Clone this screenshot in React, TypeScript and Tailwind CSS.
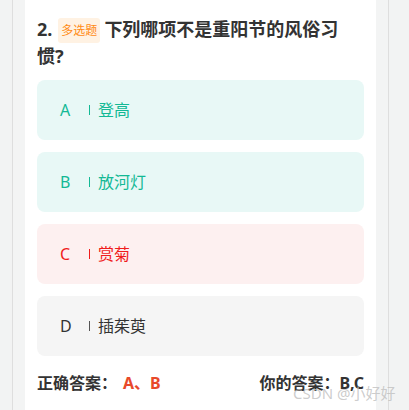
import React from 'react'

type Opt = { key: string; text: string; tone: 'right' | 'wrong' | 'plain' }

const OPTIONS: Opt[] = [
  { key: 'A', text: '登高', tone: 'right' },
  { key: 'B', text: '放河灯', tone: 'right' },
  { key: 'C', text: '赏菊', tone: 'wrong' },
  { key: 'D', text: '插茱萸', tone: 'plain' },
]

const TONE = {
  right: { box: 'bg-[#e8f8f6]', text: 'text-[#13b995]', bar: 'bg-[#13b995]' },
  wrong: { box: 'bg-[#fdf0f0]', text: 'text-[#f01c1c]', bar: 'bg-[#f01c1c]' },
  plain: { box: 'bg-[#f5f5f5]', text: 'text-[#333333]', bar: 'bg-[#555555]' },
}

const FONT = { fontFamily: '"Noto Sans", "Noto Sans CJK SC", sans-serif' }

export default function App() {
  return (
    <div className="relative h-[410px] overflow-hidden bg-[#f2f3f3] pl-[12px] pr-[20px]" style={FONT}>
      <div className="h-full border-x border-[#dedede] bg-[#f3f4f4] px-[12px]">
        <div className="h-full bg-white px-[12px] pt-[16px]">
          {/* ── Question ── */}
          <h2 className="pr-[16px] text-[18px] font-bold leading-[27px] text-[#333333]">
            2.
            <span className="ml-[6px] mr-[4px] inline-block rounded-[3px] bg-[#fff2e3] px-[3px] align-[1px] text-[12px] font-normal leading-[25px] text-[#ff8a14]">
              多选题
            </span>
            下列哪项不是重阳节的风俗习惯?
          </h2>

          {/* ── Options ── */}
          <div className="mt-[10px] flex flex-col gap-[12px]">
            {OPTIONS.map((o) => {
              const t = TONE[o.tone]
              return (
                <div key={o.key} className={`flex h-[60px] items-center rounded-[8px] pl-[23px] ${t.box} ${t.text}`}>
                  <span className="w-[29px] text-[16px] leading-none">{o.key}</span>
                  <span className={`h-[10px] w-px ${t.bar}`} />
                  <span className="ml-[8px] text-[16px] leading-none">{o.text}</span>
                </div>
              )
            })}
          </div>

          {/* ── Answers ── */}
          <div className="mt-[16px] flex items-center justify-between text-[16px] font-bold leading-[22px] text-[#333333]">
            <div>
              正确答案：<span className="ml-[6px] text-[#e8492a]">A、B</span>
            </div>
            <div>你的答案：B,C</div>
          </div>
        </div>
      </div>

      {/* watermark */}
      <div className="absolute left-[293px] top-[383px] text-[15px] leading-[20px] text-[#bfbfbf]/80">CSDN @小好好</div>
    </div>
  )
}
